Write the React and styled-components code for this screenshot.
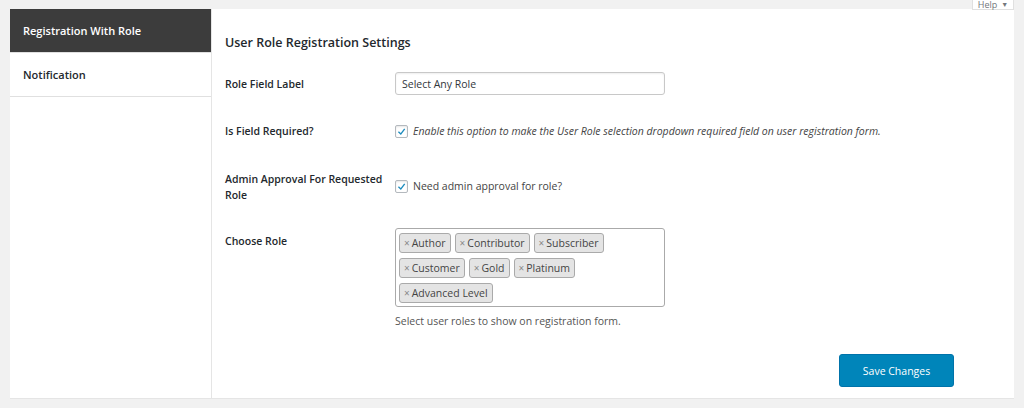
import styled, { createGlobalStyle } from "styled-components"

const GlobalStyle = createGlobalStyle`
  html, body {
    margin: 0;
    padding: 0;
    background: #f1f1f1;
    font-family: "Open Sans", "Noto Sans", sans-serif;
    color: #23282d;
    overflow: hidden;
  }
`

const Page = styled.div`
  position: relative;
  width: 1024px;
  height: 408px;
  padding: 9px 10px 0 10px;
  box-sizing: border-box;
`

const HelpTab = styled.div`
  position: absolute;
  top: 0;
  right: 10px;
  width: 42px;
  height: 10px;
  background: #fff;
  border: 1px solid #e0e0e0;
  border-top: none;
  box-sizing: border-box;
  font-size: 9px;
  color: #72777c;
  display: flex;
  align-items: center;
  justify-content: center;
  gap: 4px;
  line-height: 10px;

  span {
    font-size: 7px;
  }
`

const Panel = styled.div`
  display: flex;
  height: 389px;
  background: #fff;
  border-bottom: 1px solid #e5e5e5;
`

const Sidebar = styled.nav`
  width: 201px;
  border-right: 1px solid #e5e5e5;
  display: flex;
  flex-direction: column;
`

const Tab = styled.div`
  height: 43px;
  display: flex;
  align-items: center;
  padding-left: 13px;
  font-size: 11px;
  font-weight: 600;
  color: ${p => (p.$active ? "#fff" : "#23282d")};
  background: ${p => (p.$active ? "#3c3c3c" : "#fff")};
  border-bottom: 1px solid #e0e0e0;
`

const Content = styled.section`
  flex: 1;
  padding: 25px 0 0 13px;
  display: flex;
  flex-direction: column;
`

const Title = styled.h2`
  margin: 0 0 21px 0;
  font-size: 12.5px;
  font-weight: 600;
  line-height: 17px;
`

const Row = styled.div`
  display: flex;
  min-height: ${p => p.$h || "46px"};
`

const Label = styled.div`
  width: 170px;
  font-size: 10.5px;
  font-weight: 600;
  line-height: 16px;
  padding-top: ${p => p.$pt || "0"};
`

const Field = styled.div`
  width: 270px;
  padding-top: ${p => p.$pt || "0"};
`

const TextInput = styled.div`
  width: 270px;
  height: 23px;
  box-sizing: border-box;
  border: 1px solid #c8c8c8;
  border-radius: 3px;
  box-shadow: inset 0 1px 2px rgba(0,0,0,0.07);
  padding-left: 6px;
  font-size: 10.5px;
  color: #32373c;
  display: flex;
  align-items: center;
`

const CheckLine = styled.label`
  display: flex;
  align-items: center;
  gap: 5px;
  white-space: nowrap;
  font-size: 10.5px;
  color: #444;
  font-style: ${p => (p.$italic ? "italic" : "normal")};
`

const Box = styled.span`
  width: 13px;
  height: 13px;
  box-sizing: border-box;
  border: 1px solid #b4b9be;
  border-radius: 2px;
  box-shadow: inset 0 1px 2px rgba(0,0,0,0.1);
  background: #fff;
  display: flex;
  align-items: center;
  justify-content: center;
`

const Multi = styled.div`
  width: 270px;
  height: 79px;
  box-sizing: border-box;
  border: 1px solid #aaa;
  border-radius: 3px;
  padding: 4px 3px;
  display: flex;
  flex-wrap: wrap;
  align-content: flex-start;
  gap: 5px 4px;
`

const Chip = styled.span`
  height: 20px;
  box-sizing: border-box;
  border: 1px solid #aaa;
  border-radius: 3px;
  background: #e4e4e4;
  padding: 0 4px;
  display: flex;
  align-items: center;
  font-size: 10.5px;
  color: #444;

  b {
    font-weight: 400;
    color: #888;
    font-size: 10px;
    margin-right: 2px;
  }
`

const Hint = styled.p`
  margin: 7px 0 0 0;
  font-size: 10.5px;
  color: #555;
`

const Footer = styled.div`
  display: flex;
  justify-content: flex-end;
  padding: 26px 60px 0 0;
`

const SaveButton = styled.button`
  width: 115px;
  height: 33px;
  background: #0085ba;
  border: 1px solid #0073aa;
  border-radius: 3px;
  color: #fff;
  font-family: inherit;
  font-size: 10.5px;
`

const Check = () => (
  <Box>
    <svg width="11" height="11" viewBox="0 0 20 20">
      <path d="M14.8 4.6L8.6 12.8 5.2 9.6 3.6 11.4 8.9 16.4 16.8 6z" fill="#1e8cbe" />
    </svg>
  </Box>
)

const roles = ["Author", "Contributor", "Subscriber", "Customer", "Gold", "Platinum", "Advanced Level"]

export default function App() {
  return (
    <>
      <GlobalStyle />
      <Page>
        <HelpTab>Help <span>▼</span></HelpTab>
        <Panel>
          <Sidebar>
            <Tab $active>Registration With Role</Tab>
            <Tab>Notification</Tab>
          </Sidebar>
          <Content>
            <Title>User Role Registration Settings</Title>
            <Row $h="47px">
              <Label $pt="4px">Role Field Label</Label>
              <Field>
                <TextInput>Select Any Role</TextInput>
              </Field>
            </Row>
            <Row $h="52px">
              <Label $pt="4px">Is Field Required?</Label>
              <Field $pt="5px">
                <CheckLine $italic><Check />Enable this option to make the User Role selection dropdown required field on user registration form.</CheckLine>
              </Field>
            </Row>
            <Row $h="57px">
              <Label>Admin Approval For Requested Role</Label>
              <Field $pt="8px">
                <CheckLine><Check />Need admin approval for role?</CheckLine>
              </Field>
            </Row>
            <Row>
              <Label $pt="5px">Choose Role</Label>
              <Field>
                <Multi>
                  {roles.map(r => (
                    <Chip key={r}><b>×</b>{r}</Chip>
                  ))}
                </Multi>
                <Hint>Select user roles to show on registration form.</Hint>
              </Field>
            </Row>
            <Footer>
              <SaveButton>Save Changes</SaveButton>
            </Footer>
          </Content>
        </Panel>
      </Page>
    </>
  )
}
